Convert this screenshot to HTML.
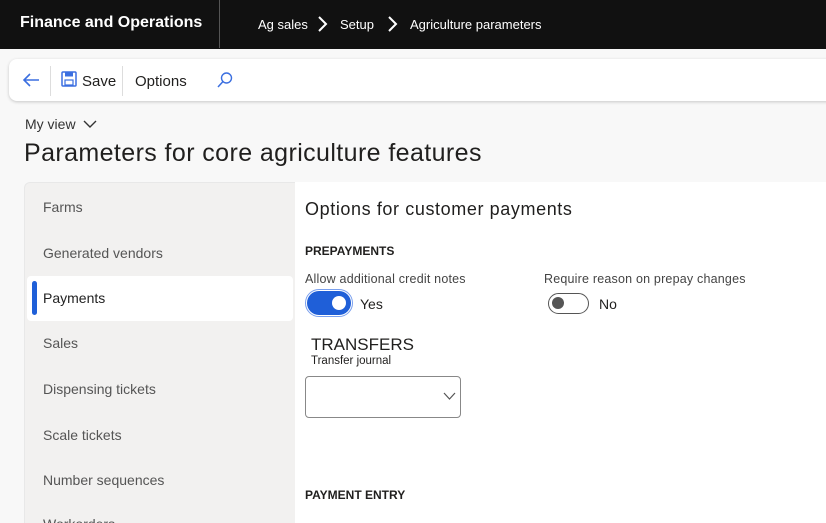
<!DOCTYPE html>
<html><head><style>
*{margin:0;padding:0;box-sizing:border-box}
html,body{width:826px;height:523px;overflow:hidden}
body{background:#f8f8f8;font-family:"Liberation Sans",sans-serif;position:relative;color:#201f1e}
.a{position:absolute;white-space:nowrap}
</style></head><body>
<div class="a" style="left:0;top:0;width:826px;height:49px;background:#111"></div>
<div class="a" style="left:20px;top:14px;color:#fff;font-size:16px;font-weight:bold">Finance and Operations</div>
<div class="a" style="left:219px;top:0;width:1px;height:48px;background:#555"></div>
<div class="a" style="left:258px;top:17px;color:#fff;font-size:13px">Ag sales</div>
<svg class="a" style="left:316px;top:15px" width="12" height="18"><path d="M3 2l7 7-7 7" stroke="#fff" stroke-width="2" fill="none"/></svg>
<div class="a" style="left:340px;top:17px;color:#fff;font-size:13px">Setup</div>
<svg class="a" style="left:386px;top:15px" width="12" height="18"><path d="M3 2l7 7-7 7" stroke="#fff" stroke-width="2" fill="none"/></svg>
<div class="a" style="left:410px;top:17px;color:#fff;font-size:13px">Agriculture parameters</div>

<div class="a" style="left:9px;top:59px;width:830px;height:42px;background:#fff;border-radius:8px;box-shadow:0 1px 3px rgba(0,0,0,.2)"></div>
<svg class="a" style="left:21px;top:71px" width="20" height="18"><path d="M18 9H3M9 3L3 9l6 6" stroke="#3b6fe0" stroke-width="1.6" fill="none"/></svg>
<div class="a" style="left:50px;top:66px;width:1px;height:30px;background:#ddd"></div>
<svg class="a" style="left:61px;top:71px" width="16" height="16"><rect x="1" y="1" width="14" height="14" rx="1" fill="none" stroke="#3b6fe0" stroke-width="1.5"/><rect x="4" y="1.5" width="8" height="4" fill="#3b6fe0"/><rect x="4" y="9" width="8" height="5" fill="none" stroke="#3b6fe0" stroke-width="1.2"/></svg>
<div class="a" style="left:82px;top:73px;font-size:15px">Save</div>
<div class="a" style="left:122px;top:66px;width:1px;height:30px;background:#ddd"></div>
<div class="a" style="left:135px;top:73px;font-size:15px">Options</div>
<svg class="a" style="left:216px;top:71px" width="18" height="18"><circle cx="10.5" cy="7" r="5" stroke="#3b6fe0" stroke-width="1.4" fill="none"/><path d="M7 10.5L2 16" stroke="#3b6fe0" stroke-width="1.5"/></svg>

<div class="a" style="left:25px;top:116px;font-size:14px;color:#333">My view</div>
<svg class="a" style="left:83px;top:119px" width="14" height="10"><path d="M1 2l6 6 6-6" stroke="#333" stroke-width="1.4" fill="none"/></svg>
<div class="a" style="left:24px;top:139px;font-size:25px;letter-spacing:0.4px">Parameters for core agriculture features</div>

<div class="a" style="left:24px;top:182px;width:272px;height:341px;background:#f2f1f0;border-radius:6px 0 0 0;border:1px solid #e8e8e8;border-bottom:none"></div>
<div class="a" style="left:295px;top:182px;width:531px;height:341px;background:#fff"></div>
<div class="a" style="left:27px;top:276px;width:266px;height:45px;background:#fff;border-radius:4px"></div>
<div class="a" style="left:32px;top:281px;width:5px;height:34px;background:#1f5fd8;border-radius:3px"></div>
<div class="a" style="left:43px;top:199px;font-size:14px;color:#555">Farms</div>
<div class="a" style="left:43px;top:245px;font-size:14px;color:#555">Generated vendors</div>
<div class="a" style="left:43px;top:290px;font-size:14px;color:#222">Payments</div>
<div class="a" style="left:43px;top:335px;font-size:14px;color:#555">Sales</div>
<div class="a" style="left:43px;top:381px;font-size:14px;color:#555">Dispensing tickets</div>
<div class="a" style="left:43px;top:427px;font-size:14px;color:#555">Scale tickets</div>
<div class="a" style="left:43px;top:472px;font-size:14px;color:#555">Number sequences</div>
<div class="a" style="left:43px;top:516px;font-size:14px;color:#555">Workorders</div>

<div class="a" style="left:305px;top:199px;font-size:18px;letter-spacing:0.6px">Options for customer payments</div>
<div class="a" style="left:305px;top:244px;font-size:12px;font-weight:bold">PREPAYMENTS</div>
<div class="a" style="left:305px;top:272px;font-size:12.5px;color:#444;letter-spacing:0.2px">Allow additional credit notes</div>
<div class="a" style="left:544px;top:272px;font-size:12.5px;color:#444;letter-spacing:0.2px">Require reason on prepay changes</div>
<div class="a" style="left:307px;top:291px;width:44px;height:24px;background:#1f5fd8;border-radius:12px;outline:1.5px solid #7aa0ee;outline-offset:1px"></div>
<div class="a" style="left:332px;top:296px;width:14px;height:14px;background:#fff;border-radius:50%"></div>
<div class="a" style="left:360px;top:296px;font-size:14px">Yes</div>
<div class="a" style="left:548px;top:293px;width:41px;height:21px;border:1.5px solid #555;border-radius:11px"></div>
<div class="a" style="left:552px;top:297px;width:12px;height:12px;background:#555;border-radius:50%"></div>
<div class="a" style="left:599px;top:296px;font-size:14px">No</div>
<div class="a" style="left:311px;top:335px;font-size:17px">TRANSFERS</div>
<div class="a" style="left:311px;top:355px;font-size:11.5px">Transfer journal</div>
<div class="a" style="left:305px;top:376px;width:156px;height:42px;border:1px solid #888;border-radius:4px;background:#fff"></div>
<svg class="a" style="left:443px;top:392px" width="13" height="9"><path d="M1 1l5.5 6 5.5-6" stroke="#555" stroke-width="1.2" fill="none"/></svg>
<div class="a" style="left:305px;top:488px;font-size:12px;font-weight:bold">PAYMENT ENTRY</div>
</body></html>
